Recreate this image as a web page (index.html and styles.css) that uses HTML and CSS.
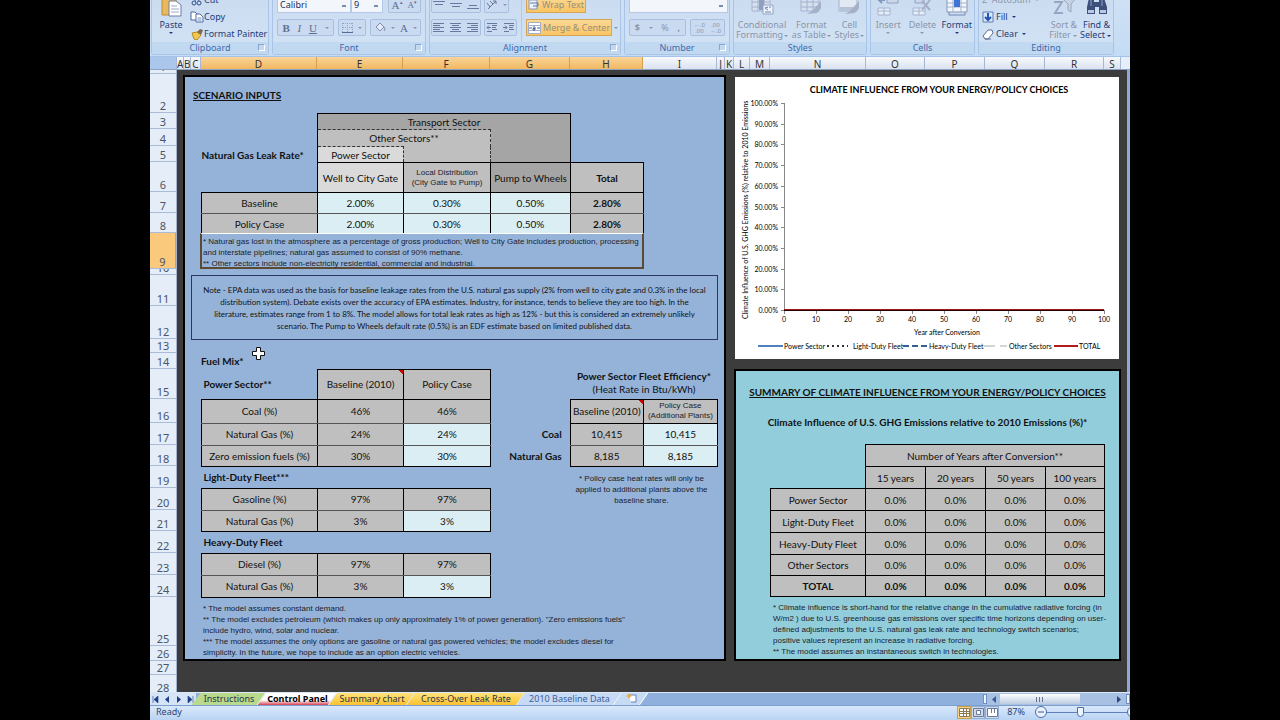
FILE: index.html
```html
<!DOCTYPE html>
<html lang="en">
<head>
<meta charset="utf-8">
<title>Control Panel</title>
<link rel="stylesheet" href="styles.css">
</head>
<body>
<div class="app">
  <header class="ribbon">
    <section class="group g-clipboard">
      <div class="tools">
        <button class="big live"><svg width="24" height="20" viewBox="0 0 24 20"><path d="M3 0h14v17H3z" fill="#e9b95c" stroke="#c08a34"/><path d="M10 3h7l5 4v11H10z" fill="#fff" stroke="#6c7fa6"/><path d="M12 8h6M12 11h8M12 14h8" stroke="#9aa9c8"/></svg><span>Paste</span><i class="car"></i></button>
        <div class="list">
          <button class="row live"><svg width="14" height="12" viewBox="0 0 14 12"><path d="M9 0 5 7M4 1l5 6" stroke="#4b6aa3"/><circle cx="4" cy="9" r="2" fill="none" stroke="#2f4f8d"/><circle cx="9" cy="9" r="2" fill="none" stroke="#2f4f8d"/></svg>Cut</button>
          <button class="row live"><svg width="14" height="12" viewBox="0 0 14 12"><path d="M1 1h4l2 2v6H1z" fill="#fff" stroke="#4b6aa3"/><path d="M6 3h4l3 3v5H6z" fill="#fff" stroke="#4b6aa3"/><path d="M7.500 7h4M7.500 9h4" stroke="#6f8fc4"/></svg>Copy</button>
          <button class="row live"><svg width="14" height="12" viewBox="0 0 14 12"><path d="m2 5 5-1 4 3-4 5-3-1z" fill="#f1c84a" stroke="#b88a25"/><path d="m7 4 3-3 3 1-2 5z" fill="#7c6a58"/></svg>Format Painter</button>
        </div>
      </div>
      <h2>Clipboard<i class="launch"></i></h2>
    </section>
    <section class="group g-font">
      <div class="tools stack">
        <div class="line">
          <select class="combo face" aria-label="Font"><option>Calibri</option></select><select class="combo size" aria-label="Font size"><option>9</option></select>
          <span class="cluster push"><button class="serif">A<sup>▴</sup></button><button class="serif small">A<sup>▾</sup></button></span>
        </div>
        <div class="line">
          <span class="cluster c60"><button class="serif"><b>B</b></button><button class="serif"><em>I</em></button><button class="serif"><u>U</u></button><i class="car"></i></span>
          <span class="cluster"><button aria-label="Borders"><svg width="11" height="11"><path d="M.5 1v9M5.500 1v9M10.500 1v9M1 1.500h9M1 5.500h9" stroke="#8fa3c8" stroke-dasharray="1 1"/><path d="M0 10.500h11" stroke="#566b96"/></svg></button><i class="car"></i></span>
          <span class="cluster push"><button aria-label="Fill colour"><svg width="12" height="11"><path d="m2 5 4-4 4 4-4 4z" fill="#e5ecf7" stroke="#7c8db0"/><path d="M10 5q2 3 0 4" stroke="#7c8db0" fill="none"/></svg></button><i class="car"></i><button class="serif">A</button><i class="car"></i></span>
        </div>
      </div>
      <h2>Font<i class="launch"></i></h2>
    </section>
    <section class="group g-align">
      <div class="tools">
        <div class="stack">
          <div class="line">
            <span class="cluster"><button aria-label="Top align"><svg width="12" height="10"><path d="M0 1.500h12M2 4.500h8" stroke="#66789e"/></svg></button><button aria-label="Middle align"><svg width="12" height="10"><path d="M0 3.500h12M2 6.500h8" stroke="#66789e"/></svg></button><button aria-label="Bottom align"><svg width="12" height="10"><path d="M2 5.500h8M0 8.500h12" stroke="#66789e"/></svg></button></span>
            <span class="cluster"><button aria-label="Orientation"><svg width="12" height="11"><path d="M2 10 10 2M7 2h3v3M1 4l3 4M4 2l3 3" stroke="#66789e" fill="none"/></svg></button><i class="car"></i></span>
          </div>
          <div class="line">
            <span class="cluster"><button aria-label="Left"><svg width="12" height="11"><path d="M0 1.500h11M0 3.500h7M0 5.500h11M0 7.500h7M0 9.500h11" stroke="#66789e"/></svg></button><button aria-label="Centre"><svg width="12" height="11"><path d="M0 1.500h11M2 3.500h7M0 5.500h11M2 7.500h7M0 9.500h11" stroke="#66789e"/></svg></button><button aria-label="Right"><svg width="12" height="11"><path d="M0 1.500h11M4 3.500h7M0 5.500h11M4 7.500h7M0 9.500h11" stroke="#66789e"/></svg></button></span>
            <span class="cluster"><button aria-label="Decrease indent"><svg width="12" height="11"><path d="M1 1.500h10M6 3.500h5M6 5.500h4M6 7.500h5M1 9.500h5M5 5.500H1l2-2M1 5.500l2 2" stroke="#66789e" fill="none"/></svg></button><button aria-label="Increase indent"><svg width="12" height="11"><path d="M1 1.500h10M6 3.500h5M6 5.500h4M6 7.500h5M1 9.500h5M0 5.500h4l-2-2M4 5.500l-2 2" stroke="#66789e" fill="none"/></svg></button></span>
          </div>
        </div>
        <div class="stack second">
          <button class="on"><svg width="12" height="12"><path d="M1 1h8v9H1z" fill="#eef3fb" stroke="#8797b5"/><path d="M2 4h8v3H5" stroke="#5b78b0" fill="none"/></svg>Wrap Text</button>
          <div class="line tight"><button class="on"><svg width="13" height="12"><path d="M.5.500h12v11H.5z" fill="#fff" stroke="#a3aec6"/><path d="M1 3.500h11M1 8.500h11" stroke="#a3aec6"/><path d="M1 6h3M9 6h3" stroke="#44609b"/><path d="M5 5h2v3H5V6.500h2" stroke="#44609b" fill="none"/></svg>Merge &amp; Center</button><i class="car"></i></div>
        </div>
      </div>
      <h2>Alignment<i class="launch"></i></h2>
    </section>
    <section class="group g-number">
      <div class="tools stack">
        <select class="combo full" aria-label="Number format"><option></option></select>
        <div class="line">
          <span class="cluster c60"><button><b>$</b></button><i class="car"></i><button>%</button><button><b>,</b></button></span>
          <span class="cluster push"><button class="dec">←.0<br>.00</button><button class="dec">.00<br>→.0</button></span>
        </div>
      </div>
      <h2>Number<i class="launch"></i></h2>
    </section>
    <section class="group g-styles">
      <div class="tools spread">
        <button class="big"><svg width="24" height="20" viewBox="0 0 24 20"><path d="M2 0h18v13H2z" fill="#d6dfee" stroke="#a3b2cf"/><path d="M8 0v13M14 0v13M2 4h18M2 9h18" stroke="#a3b2cf"/><path d="M9 0h5v12H9z" fill="#8f9fc0"/><path d="M13 7h10v9H13z" fill="#eef3fa" stroke="#93a4c5"/><path d="m18 9-3 1 3 2M19 9h2M15 14h6" stroke="#7083aa" fill="none"/></svg><span>Conditional<br>Formatting<i class="car"></i></span></button>
        <button class="big"><svg width="24" height="20" viewBox="0 0 24 20"><path d="M2 0h18v13H2z" fill="#d6dfee" stroke="#a3b2cf"/><path d="M8 0v13M14 0v13M2 4h18M2 9h18" stroke="#a3b2cf"/><path d="m22 3-9 10-5 3 10-1 4-5z" fill="#a4b1c9"/></svg><span>Format<br>as Table<i class="car"></i></span></button>
        <button class="big"><svg width="24" height="20" viewBox="0 0 24 20"><path d="M2 0h18v13H2z" fill="#e3e9f3" stroke="#a3b2cf"/><path d="M3 9h16v4H3z" fill="#b6c2d8"/><path d="m22 3-9 10-5 3 10-1 4-5z" fill="#a4b1c9"/></svg><span>Cell<br>Styles<i class="car"></i></span></button>
      </div>
      <h2>Styles</h2>
    </section>
    <section class="group g-cells">
      <div class="tools spread">
        <button class="big"><svg width="24" height="20" viewBox="0 0 24 20"><path d="M2 10h12v7H2zM8 10v7M2 13h12" fill="#e8eef7" stroke="#a3b2cf"/><path d="M11 0h11v5H11z" fill="#cdd7e9" stroke="#8fa2c7"/><path d="M9 2H3m3-3L3 2l3 3" stroke="#8295bd" stroke-width="2" fill="none"/></svg><span>Insert</span><i class="car"></i></button>
        <button class="big"><svg width="24" height="20" viewBox="0 0 24 20"><path d="M3 10h12v7H3zM9 10v7M3 13h12" fill="#e8eef7" stroke="#a3b2cf"/><path d="M5 0h9v5H5z" fill="#cdd7e9" stroke="#8fa2c7"/><path d="m12 3 8 9M20 2l-8 10" stroke="#a3aec6" stroke-width="2"/></svg><span>Delete</span><i class="car"></i></button>
        <button class="big live"><svg width="24" height="20" viewBox="0 0 24 20"><path d="M2 0h20v14H2z" fill="#f3f6fb" stroke="#8797b5"/><path d="M2 5h20M2 9h20M8 0v14M16 0v14" stroke="#a3b2cf"/><path d="M9 0h6v9H9z" fill="#3f74d6"/><path d="M4 14v3h16v-3" fill="none" stroke="#7486ad"/></svg><span>Format</span><i class="car"></i></button>
      </div>
      <h2>Cells</h2>
    </section>
    <section class="group g-edit">
      <div class="tools">
        <div class="list">
          <button class="row">Σ&nbsp; AutoSum<i class="car"></i></button>
          <button class="row live"><svg width="12" height="12"><path d="M1 1h10v10H1z" fill="#dbe8fb" stroke="#5c7bb5"/><path d="M6 2v6M3 6l3 3 3-3" stroke="#1f55b5" stroke-width="2" fill="none"/></svg>Fill<i class="car"></i></button>
          <button class="row live"><svg width="12" height="12"><path d="m1 8 5-6h4l1 3-5 6H3z" fill="#fff" stroke="#5d6f95"/><path d="M3 11h6" stroke="#5d6f95"/></svg>Clear<i class="car"></i></button>
        </div>
        <button class="big push"><svg width="24" height="20" viewBox="0 0 24 20"><path d="M2 4h8L3 15h8" stroke="#98a6c2" stroke-width="2" fill="none"/><path d="M10 0h14l-5 6v8l-3-2V6z" fill="#c8d1e2" stroke="#98a6c2"/></svg><span>Sort &amp;<br>Filter<i class="car"></i></span></button>
        <button class="big live"><svg width="24" height="20" viewBox="0 0 24 20"><path d="M4 0h5v4h5V0h5l3 9v7h-8V9h-4v7H2V9z" fill="#3c5079"/><path d="M3 12h6v3H3zM15 12h6v3h-6z" fill="#b9c8e4"/><path d="M6 1v7M17 1v7" stroke="#8ea4ce"/></svg><span>Find &amp;<br>Select<i class="car"></i></span></button>
      </div>
      <h2>Editing</h2>
    </section>
  </header>

  <div class="colhead" id="cols"><span class="corner"></span></div>

  <main class="body">
    <div class="rowhead" id="rows"></div>
    <div class="sheet">
      <section class="panel inputs">
        <h1>SCENARIO INPUTS</h1>
        <table class="grid leak">
          <colgroup><col class="w116"><col class="w86"><col class="w87"><col class="w80"><col class="w73"></colgroup>
          <tr class="h16"><td class="none" rowspan="2"></td><td class="dark ob" colspan="3">Transport Sector</td><td class="none" rowspan="3"></td></tr>
          <tr class="h17"><td class="mid dash" colspan="2">Other Sectors**</td><td class="dark ne" rowspan="2"></td></tr>
          <tr class="h16"><th class="none left" scope="row">Natural Gas Leak Rate*</th><td class="pale dash">Power Sector</td><td class="mid nt"></td></tr>
          <tr class="h30"><td class="none"></td><td class="pale">Well to City Gate</td><td class="mid fine">Local Distribution<br>(City Gate to Pump)</td><td class="dark">Pump to Wheels</td><th class="mid">Total</th></tr>
          <tr class="h21 thin"><td>Baseline</td><td class="in">2.00%</td><td class="in">0.30%</td><td class="in">0.50%</td><th>2.80%</th></tr>
          <tr class="h20 last"><td>Policy Case</td><td class="in">2.00%</td><td class="in">0.30%</td><td class="in">0.50%</td><th>2.80%</th></tr>
        </table>
        <p class="picked fine">* Natural gas lost in the atmosphere as a percentage of gross production; Well to City Gate includes production, processing<br>and interstate pipelines; natural gas assumed to consist of 90% methane.<br>** Other sectors include non-electricity residential, commercial and industrial.</p>
        <p class="note">Note - EPA data was used as the basis for baseline leakage rates from the U.S. natural gas supply (2% from well to city gate and 0.3% in the local<br>distribution system). Debate exists over the accuracy of EPA estimates. Industry, for instance, tends to believe they are too high. In the<br>literature, estimates range from 1 to 8%. The model allows for total leak rates as high as 12% - but this is considered an extremely unlikely<br>scenario. The Pump to Wheels default rate (0.5%) is an EDF estimate based on limited published data.</p>
        <h3>Fuel Mix*</h3>
        <svg class="cursor" width="13" height="13" viewBox="0 0 13 13"><path d="M4.500.500h4v4h4v4h-4v4h-4v-4h-4v-4h4z" fill="#fff" stroke="#111"/></svg>
        <div class="split">
          <table class="grid fuel">
            <colgroup><col class="w116"><col class="w86"><col class="w87"></colgroup>
            <tr class="h30"><th class="none sub">Power Sector**</th><td class="flag">Baseline (2010)</td><td>Policy Case</td></tr>
            <tr class="h24 thin"><td>Coal (%)</td><td>46%</td><td>46%</td></tr>
            <tr class="h22 thin"><td>Natural Gas (%)</td><td>24%</td><td class="in">24%</td></tr>
            <tr class="h21"><td>Zero emission fuels (%)</td><td>30%</td><td class="in">30%</td></tr>
            <tr class="h22"><th class="none sub" colspan="3">Light-Duty Fleet***</th></tr>
            <tr class="h22 thin"><td>Gasoline (%)</td><td>97%</td><td>97%</td></tr>
            <tr class="h21"><td>Natural Gas (%)</td><td>3%</td><td class="in">3%</td></tr>
            <tr class="h22"><th class="none sub" colspan="3">Heavy-Duty Fleet</th></tr>
            <tr class="h22 thin"><td>Diesel (%)</td><td>97%</td><td>97%</td></tr>
            <tr class="h22"><td>Natural Gas (%)</td><td>3%</td><td class="in">3%</td></tr>
          </table>
          <div class="eff">
            <div class="efftitle"><b>Power Sector Fleet Efficiency*</b><br>(Heat Rate in Btu/kWh)</div>
            <table class="grid heat">
              <colgroup><col class="w79"><col class="w73"><col class="w74"></colgroup>
              <tr class="h24"><td class="none"></td><td class="flag">Baseline (2010)</td><td class="fine">Policy Case<br>(Additional Plants)</td></tr>
              <tr class="h22 thin"><th class="none right">Coal</th><td>10,415</td><td class="in">10,415</td></tr>
              <tr class="h21"><th class="none right">Natural Gas</th><td>8,185</td><td class="in">8,185</td></tr>
            </table>
            <p class="fine effnote">* Policy case heat rates will only be<br>applied to additional plants above the<br>baseline share.</p>
          </div>
        </div>
        <p class="fine foot">* The model assumes constant demand.<br>** The model excludes petroleum (which makes up only approximately 1% of power generation). "Zero emissions fuels"<br>include hydro, wind, solar and nuclear.<br>*** The model assumes the only options are gasoline or natural gas powered vehicles; the model excludes diesel for<br>simplicity. In the future, we hope to include as an option electric vehicles.</p>
      </section>
      <div class="side">
        <div class="chart"><svg id="chart" width="100%" viewBox="0 0 384 282" role="img" aria-label="Climate influence chart"></svg></div>
        <section class="panel summary">
          <h1>SUMMARY OF CLIMATE INFLUENCE FROM YOUR ENERGY/POLICY CHOICES</h1>
          <h2>Climate Influence of U.S. GHG Emissions relative to 2010 Emissions (%)*</h2>
          <table class="grid sum">
            <colgroup><col class="w95"><col class="w60"><col class="w60"><col class="w60"><col class="w59"></colgroup>
            <tr class="h22"><td class="none" rowspan="2"></td><td colspan="4">Number of Years after Conversion**</td></tr>
            <tr class="h22"><td>15 years</td><td>20 years</td><td>50 years</td><td>100 years</td></tr>
            <tr class="h22"><td>Power Sector</td><td>0.0%</td><td>0.0%</td><td>0.0%</td><td>0.0%</td></tr>
            <tr class="h22"><td>Light-Duty Fleet</td><td>0.0%</td><td>0.0%</td><td>0.0%</td><td>0.0%</td></tr>
            <tr class="h22"><td>Heavy-Duty Fleet</td><td>0.0%</td><td>0.0%</td><td>0.0%</td><td>0.0%</td></tr>
            <tr class="h21"><td>Other Sectors</td><td>0.0%</td><td>0.0%</td><td>0.0%</td><td>0.0%</td></tr>
            <tr class="h21"><th>TOTAL</th><th>0.0%</th><th>0.0%</th><th>0.0%</th><th>0.0%</th></tr>
          </table>
          <p class="fine foot">* Climate influence is short-hand for the relative change in the cumulative radiative forcing (in<br>W/m2 ) due to U.S. greenhouse gas emissions over specific time horizons depending on user-<br>defined adjustments to the U.S. natural gas leak rate and technology switch scenarios;<br>positive values represent an increase in radiative forcing.<br>** The model assumes an instantaneous switch in technologies.</p>
        </section>
      </div>
    </div>
    <div class="vscroll"></div>
  </main>

  <nav class="tabs">
    <div class="moves"><button aria-label="First"><svg width="7" height="7"><path d="M1 0v7M6 0v7L2 3.500z" stroke="#1c3f86" fill="#1c3f86" stroke-width=".6"/></svg></button><button aria-label="Previous"><svg width="7" height="7"><path d="M5 0v7L1 3.500z" fill="#1c3f86"/></svg></button><button aria-label="Next"><svg width="7" height="7"><path d="M2 0v7l4-3.500z" fill="#1c3f86"/></svg></button><button aria-label="Last"><svg width="7" height="7"><path d="M6 0v7M1 0v7l4-3.500z" stroke="#1c3f86" fill="#1c3f86" stroke-width=".6"/></svg></button></div>
    <a class="tab green" href="#"><span>Instructions</span></a>
    <a class="tab active" href="#"><span>Control Panel</span></a>
    <a class="tab gold t3" href="#"><span>Summary chart</span></a>
    <a class="tab gold t4" href="#"><span>Cross-Over Leak Rate</span></a>
    <a class="tab pale5" href="#"><span>2010 Baseline Data</span></a>
    <a class="tab new" href="#" aria-label="Insert sheet"><span><svg width="13" height="10"><path d="M4 2h7v7H6" fill="#fff" stroke="#6a83b5"/><path d="m4 0 1 2 2 1-2 1-1 2-1-2-2-1 2-1z" fill="#f0a637"/></svg></span></a>
    <div class="hscroll"><i class="grip"></i><svg width="7" height="7"><path d="M6 0v7L2 3.500z" fill="#3a5995"/></svg><div class="thumb"><svg width="9" height="5"><path d="M.5 0v5M3.500 0v5M6.500 0v5" stroke="#66758f"/></svg></div><div class="track"></div><svg width="7" height="7"><path d="M1 0v7l4-3.500z" fill="#27457f"/></svg><i class="grip"></i></div>
  </nav>

  <footer class="status">
    <span class="ready">Ready</span>
    <div class="views"><button class="sel" aria-label="Normal"><svg width="11" height="9"><path d="M.5.500h10v8H.5zM.5 3.500h10M.5 5.500h10M4.500.500v8M7.500.500v8" fill="#fff" stroke="#8a7b55"/></svg></button><button aria-label="Page layout"><svg width="11" height="9"><path d="M.5.500h10v8H.5z" fill="#cfd9ea" stroke="#6b7a98"/><path d="M3.500 2.500h4v4h-4z" fill="#fff" stroke="#6b7a98"/></svg></button><button aria-label="Page break"><svg width="11" height="9"><path d="M.5.500h10v8H.5z" fill="#fff" stroke="#6b7a98"/><path d="M4.500 0v5M7.500 0v5" stroke="#6b7a98"/></svg></button></div>
    <label class="pct" for="zoom">87%</label>
    <button class="round" aria-label="Zoom out"><svg width="10" height="10"><path d="M2 5h6" stroke="#3c5a94"/></svg></button>
    <input id="zoom" type="range" min="0" max="100" value="41">
    <button class="round" aria-label="Zoom in"><svg width="10" height="10"><path d="M2 5h6M5 2v6" stroke="#3c5a94"/></svg></button>
  </footer>
</div>
<script src="app.js"></script>
</body>
</html>
```
FILE: styles.css
```css
* { box-sizing: border-box; }
body { margin: 0; background: #000; font-family: Lato, "Liberation Sans", sans-serif; color: #111; overflow: hidden; }
h1, h2, h3, p { margin: 0; font-weight: normal; }
button { border: 0; background: none; padding: 0; font: inherit; color: inherit; }
svg { display: block; flex: none; }
.app { margin: 0 150px; height: 100vh; display: flex; flex-direction: column; overflow: hidden; background: #bfd5ef; }

/* ribbon */
.ribbon { flex: none; height: 57px; display: flex; gap: 3px; padding: 0 1px 1px; background: linear-gradient(#cfe0f4, #c3dcf5); border-bottom: 1px solid #a5c3e8; overflow: hidden; font: 9px/12px "Noto Sans", sans-serif; color: #8a95a8; }
.group { flex: none; display: flex; flex-direction: column; border: 1px solid #a9c4e6; border-top: 0; border-radius: 0 0 3px 3px; background: linear-gradient(#cbdcf1, #d3e3f5); }
.group h2 { height: 12px; background: #c1d8f1; color: #3e6aaa; text-align: center; font-size: 9px; line-height: 12px; position: relative; }
.launch { position: absolute; right: 3px; top: 2px; width: 7px; height: 7px; border: 1px solid #8aa6d0; border-right-color: #fff; border-bottom-color: #fff; }
.g-clipboard { width: 118px; } .g-font { width: 154px; } .g-align { width: 192px; } .g-number { width: 106px; }
.g-styles { width: 134px; } .g-cells { width: 105px; } .g-edit { width: 136px; }
.tools { flex: none; height: 42px; display: flex; align-items: flex-end; overflow: hidden; }
.stack { display: flex; flex-direction: column; align-items: stretch; justify-content: flex-end; gap: 6px; padding: 0 4px 6px; }
.tools > .stack { padding-left: 1px; padding-right: 0; }
.tools > .second { align-items: flex-start; margin-left: 4px; padding-left: 4px; border-left: 1px solid #b4cae8; }
.line { display: flex; align-items: center; gap: 4px; height: 17px; }
.g-align .line { gap: 3px; }
.g-align .tight { gap: 0; }
.push { margin-left: auto; }
.live { color: #1e3c78; }
.big { min-width: 32px; height: 44px; display: flex; flex-direction: column; align-items: center; flex: none; line-height: 10px; text-align: center; white-space: nowrap; }
.g-clipboard .big { width: 38px; }
.big svg { margin-bottom: 2px; }
.spread { justify-content: space-around; }
.g-styles .big { min-width: 28px; }
.g-styles .car { margin: 1px 0 1px 1px; }
.list { display: flex; flex-direction: column; justify-content: flex-end; }
.g-edit .list { padding-left: 3px; }
.row { height: 17px; display: flex; align-items: center; gap: 2px; white-space: nowrap; }
.g-clipboard .row { gap: 0; }
.car { display: inline-block; width: 0; height: 0; border: 2px solid transparent; border-top-color: currentColor; border-bottom: 0; margin: 2px; vertical-align: middle; }
.combo { appearance: none; height: 17px; border: 1px solid #b4c9e5; background: #f3f7fc linear-gradient(#7a8cae, #7a8cae) calc(100% - 4px) 8px / 4px 2px no-repeat; font: 9px/12px "Noto Sans", sans-serif; padding: 0 2px; color: #1c2c4c; }
.face { width: 74px; } .size { width: 32px; margin-left: -4px; } .full { width: 99px; flex: none; }
.cluster { display: flex; align-items: center; justify-content: space-around; height: 17px; border: 1px solid #a9bfe0; border-radius: 2px; background: #cadaf0; padding: 0 3px; gap: 5px; }
.g-align .cluster { padding: 0 1px; }
.cluster .car { margin: 0; }
.c60 { width: 60px; }
.serif { font: 11px/14px "Liberation Serif", serif; color: #5d6f93; }
.serif sup { font-size: 5px; line-height: 1px; }
.small { font-size: 9px; }
.dec { font-size: 6px; line-height: 6px; }
.on { display: flex; align-items: center; gap: 2px; height: 17px; padding: 0 1px; border: 1px solid #d3a757; background: linear-gradient(#fbd995, #fbc463); color: #94917f; white-space: nowrap; }

/* headers */
.colhead { flex: none; height: 13px; display: flex; background: #e6eef9; border-bottom: 1px solid #8ca3c6; font: 10px/14px "Noto Sans", sans-serif; color: #333; text-align: center; }
.colhead span { flex: none; border-right: 1px solid #a8b8d2; background: linear-gradient(#f7f9fc, #dbe3f0); overflow: hidden; }
.colhead .corner { width: 27px; background: #aac6eb; }
.colhead .sel { background: linear-gradient(#f9d499, #f1b862); border-right-color: #d5a04e; }
.body { flex: 1; min-height: 0; display: flex; overflow: hidden; }
.rowhead { flex: none; width: 27px; background: #e4edf8; font: 11px/13px "Noto Sans", sans-serif; color: #4a5568; text-align: center; border-right: 1px solid #a0b2cf; }
.rowhead div { display: flex; align-items: flex-end; justify-content: center; border-bottom: 1px solid #a9bbd6; overflow: hidden; }
.rowhead .sel { background: #fac97c; border-right: 1px solid #d3a257; }
.sheet { flex: 1; min-width: 0; display: grid; grid-template-columns: minmax(0, 543fr) minmax(0, 387fr); align-items: start; gap: 8px; padding: 5px 6px 0; background: #3c3c3c; overflow: hidden; }
.vscroll { flex: none; width: 3px; background: #8fa9d3; }
.panel { border: 2px solid #000; }
.inputs { position: relative; min-height: 586px; padding: 0 6px; background: #95b3d9; }
.side { display: flex; flex-direction: column; gap: 10px; }
.chart { margin: 2px 2px 0 1px; background: #fff; }
.summary { min-height: 292px; background: #92cddc; text-align: center; white-space: nowrap; }
.panel h1 { font-size: 10px; font-weight: bold; text-decoration: underline; }
.inputs h1 { line-height: 36px; padding-left: 2px; }
.summary h1 { line-height: 42px; }
.summary h2 { font-size: 10px; font-weight: bold; line-height: 18px; margin-bottom: 13px; }
.inputs h3 { font-size: 10px; font-weight: bold; line-height: 16px; margin: 13px 0 0 10px; }

.grid { border-collapse: collapse; table-layout: fixed; font-size: 10px; line-height: 12px; text-align: center; white-space: nowrap; }
.grid td, .grid th { padding: 0; border: 1px solid #000; background: #bfbfbf; }
.grid .in { background: #daeef3; }
.grid .dark { background: #a5a5a5; } .grid .mid { background: #bfbfbf; } .grid .pale { background: #dadada; }
.grid .thin td, .grid .thin th { border-bottom: 1px solid #555; }
.grid .none, .grid .thin .none { border: 0; background: none; }
.grid .ob { border-bottom: 0; } .grid .ne { border-top: 0; border-left: 0; }
.grid .dash { border-top: 1px dashed #333; border-right: 1px dashed #333; border-bottom: 0; }
.grid .nt { border-top: 0; border-left: 0; border-right: 1px dashed #333; }
.grid .last td, .grid .last th { border-bottom: 0; }
.grid .left { text-align: left; } .grid .sub { text-align: left; padding-left: 2px; } .grid .right { text-align: right; padding-right: 8px; }
.grid .flag { background: #bfbfbf linear-gradient(225deg, #c00 3px, #bfbfbf 3px) top right / 6px 6px no-repeat; }
.leak { width: 443px; margin-left: 10px; } .fuel { width: 290px; } .heat { width: 227px; } .sum { width: 335px; margin-left: 34px; }
.w116 { width: 116px; } .w95 { width: 95px; } .w87 { width: 87px; } .w86 { width: 86px; } .w80 { width: 80px; } .w79 { width: 79px; }
.w74 { width: 74px; } .w73 { width: 73px; } .w60 { width: 60px; } .w59 { width: 59px; }
.h16 { height: 16px; } .h17 { height: 17px; } .h20 { height: 20px; } .h21 { height: 21px; } .h22 { height: 22px; } .h24 { height: 24px; } .h30 { height: 30px; }
.fine, .grid .fine { font-family: "Liberation Sans", sans-serif; font-size: 8px; line-height: 11px; white-space: nowrap; color: #1c1c28; }
.grid .fine { line-height: 10px; }
.picked { margin: -1px 0 0 9px; width: 444px; height: 36px; padding: 2px 1px 0; border: 2px solid #5d4a35; border-top: 1px solid #fff; }
.note { margin-top: 6px; height: 65px; padding-top: 8px; border: 1px solid #263a5e; font-size: 8px; line-height: 12px; text-align: center; white-space: nowrap; }
.cursor { position: absolute; left: 67px; top: 270px; }
.split { display: flex; margin-left: 10px; }
.eff { text-align: center; }
.efftitle { height: 30px; padding: 1px 0 0 79px; font-size: 10px; line-height: 13px; white-space: nowrap; }
.effnote { padding: 6px 0 0 74px; }
.foot { text-align: left; padding: 5px 0 0 12px; }
.summary .foot { padding-left: 37px; }

/* sheet tabs */
.tabs { flex: none; height: 13px; display: flex; background: #8fb0dc; border-top: 1px solid #dce8f8; font: 9px/11px "Noto Sans", sans-serif; }
.moves { width: 46px; display: flex; align-items: center; justify-content: space-around; background: #d5e4f7; }
.tab { position: relative; text-align: center; text-decoration: none; color: #28324a; width: 66px; white-space: nowrap; }
.tab::before { content: ""; position: absolute; inset: 0; background: #b9d98c; border-right: 1px solid #fff; transform: skewX(-35deg); }
.tab span { position: relative; display: flex; justify-content: center; }
.active { width: 71px; font-weight: bold; color: #000; z-index: 1; }
.active::before { background: linear-gradient(#fff 60%, #d43c50); }
.gold::before { background: linear-gradient(#ffe27a, #fbc22f); }
.t3 { width: 78px; } .t4 { width: 110px; } .pale5 { width: 97px; color: #3c5f9e; } .pale5::before, .new::before { background: #c6daf4; }
.new { width: 26px; }
.hscroll { margin-left: auto; width: 147px; display: flex; align-items: center; gap: 3px; background: #a8c0e2; }
.grip { width: 4px; height: 10px; background: #eef4fc; border: 1px solid #6f8fc4; }
.thumb { width: 80px; height: 10px; display: grid; place-items: center; background: linear-gradient(#fff, #bccbe2); }
.track { flex: 1; }
.status { flex: none; height: 15px; display: flex; align-items: flex-start; background: linear-gradient(#d9e8fb, #b9d3f3); border-top: 1px solid #7d9fd0; font: 9px/12px "Noto Sans", sans-serif; color: #2b4370; overflow: hidden; }
.ready { padding-left: 6px; }
.views { margin-left: auto; display: flex; }
.views button { width: 14px; height: 13px; display: grid; place-items: center; border: 1px solid #93add6; background: #cbdcf2; }
.views .sel { background: #fbd68a; border-color: #c99f4c; }
.pct { margin: 0 10px 0 8px; }
.round { flex: none; width: 12px; height: 12px; border: 1px solid #4e6ea8; border-radius: 50%; background: #e9f1fc; }
.status input { flex: none; appearance: none; width: 80px; height: 12px; margin: 0; background: linear-gradient(#5d7fba, #5d7fba) 0 6px / 100% 1px no-repeat; }
.status input::-webkit-slider-thumb { appearance: none; width: 7px; height: 10px; background: #eef4fc; border: 1px solid #4e6ea8; border-radius: 0 0 4px 4px; }
.status .round:last-child { margin-right: -9px; }
```
FILE: app.js
```javascript
const columns = [['A', 7], ['B', 7], ['C', 10], ['D', 116], ['E', 86], ['F', 87], ['G', 80], ['H', 73], ['I', 74], ['J', 8], ['K', 9], ['L', 16], ['M', 20], ['N', 96], ['O', 59], ['P', 60], ['Q', 60], ['R', 59], ['S', 17]];
const rowHeights = [4, 39, 16, 17, 16, 30, 21, 20, 36, 6, 31, 33, 14, 16, 30, 24, 22, 21, 22, 22, 21, 22, 22, 22, 49, 15, 14, 20];

const cols = document.getElementById('cols');
for (const [name, width] of columns) {
  const cell = document.createElement('span');
  cell.textContent = name;
  cell.style.width = width + 'px';
  if ('DEFGH'.includes(name)) cell.className = 'sel';
  cols.append(cell);
}
const rows = document.getElementById('rows');
rowHeights.forEach((height, i) => {
  const cell = document.createElement('div');
  cell.textContent = i + 1;
  cell.style.height = height + 'px';
  if (i === 8) cell.className = 'sel';
  rows.append(cell);
});

const ns = 'http://www.w3.org/2000/svg';
const chart = document.getElementById('chart');
function add(tag, attrs, text) {
  const node = document.createElementNS(ns, tag);
  for (const key in attrs) node.setAttribute(key, attrs[key]);
  if (text) node.textContent = text;
  chart.append(node);
}
const left = 49, right = 369, top0 = 26, base = 233;
add('text', { x: 204, y: 16, 'text-anchor': 'middle', 'font-size': 9, 'font-weight': 'bold' }, 'CLIMATE INFLUENCE FROM YOUR ENERGY/POLICY CHOICES');
add('text', { transform: 'translate(13 242) rotate(-90)', 'font-size': 7 }, 'Climate Influence of U.S. GHG Emissions (%) relative to 2010 Emissions');
add('path', { d: `M${left}.5 ${top0}V${base}`, stroke: '#888' });
for (let i = 0; i <= 10; i++) {
  const y = Math.round(base - (base - top0) * i / 10);
  const x = left + 32 * i;
  add('path', { d: `M${left - 3} ${y}.5h3M${x}.5 ${base}v4`, stroke: '#888' });
  add('text', { x: left - 6, y: y + 3, 'text-anchor': 'end', 'font-size': 7 }, i * 10 + '.00%');
  add('text', { x: x, y: 245, 'text-anchor': 'middle', 'font-size': 7 }, String(i * 10));
}
add('path', { d: `M${left} ${base}H${right}`, stroke: '#a01818', 'stroke-width': 2 });
add('path', { d: `M${left} ${base}.5H${right}`, stroke: '#200' });
add('text', { x: 212, y: 258, 'text-anchor': 'middle', 'font-size': 7 }, 'Year after Conversion');
const legend = [
  ['Power Sector', 23, 25, 49, '#4f81bd', '', 2],
  ['Light-Duty Fleet', 92, 21, 118, '#333', '2 3', 2],
  ['Heavy-Duty Fleet', 168, 25, 194, '#376092', '6 3', 2],
  ['Other Sectors', 249, 23, 274, '#aaa', '11 5', 1],
  ['TOTAL', 319, 24, 344, '#b01c1c', '', 2]
];
for (const [name, x, len, tx, color, dash, w] of legend) {
  add('path', { d: `M${x} 269h${len}`, stroke: color, 'stroke-width': w, 'stroke-dasharray': dash || 'none' });
  add('text', { x: tx, y: 272, 'font-size': 7 }, name);
}
```
